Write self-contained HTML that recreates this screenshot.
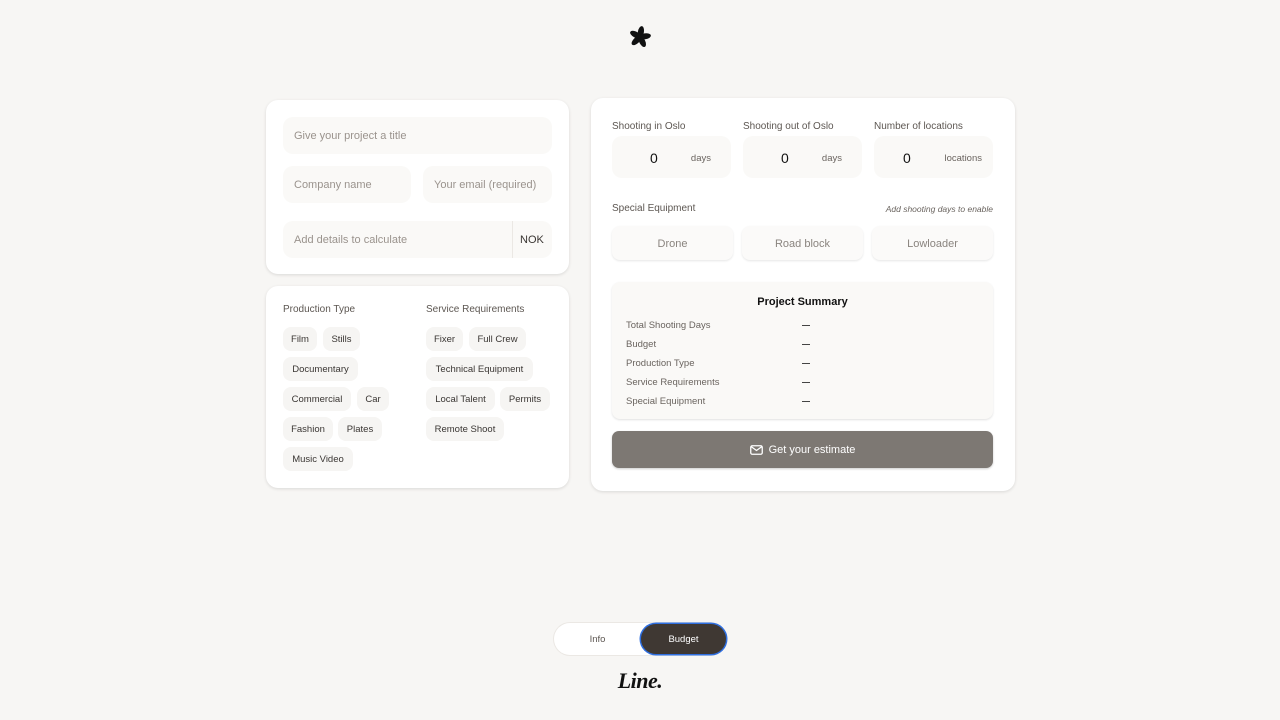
<!DOCTYPE html>
<html><head><meta charset="utf-8"><style>
*{box-sizing:border-box;margin:0;padding:0}
body{width:1280px;height:720px;background:#f7f6f4;font-family:"Liberation Sans",sans-serif;position:relative;overflow:hidden;color:#3a3633}
.a{position:absolute}
.card{position:absolute;background:#fff;border-radius:12px;box-shadow:0 1px 3px rgba(0,0,0,.12)}
.in{position:absolute;background:#faf9f7;border-radius:10px;font-size:11px;color:#9a938d;display:flex;align-items:center;padding-left:11px;padding-top:1px}
.lbl{position:absolute;font-size:10px;color:#5d5752}
.chip{position:absolute;background:#f6f5f3;border-radius:8px;height:24px;font-size:9.5px;color:#3a3633;display:flex;align-items:center;justify-content:center;padding-top:1px}
.box{position:absolute;background:#faf9f7;border-radius:10px;height:42px;width:119px}
.box .n{position:absolute;left:38px;top:14px;font-size:14px;color:#111}
.box .u{position:absolute;right:20px;top:17px;font-size:9.5px;color:#6a645f}
.eq{position:absolute;top:226px;height:34px;width:121px;background:#fbfaf9;border-radius:8px;box-shadow:0 1px 2px rgba(0,0,0,.1);font-size:11px;color:#8a847f;display:flex;align-items:center;justify-content:center;padding-top:1px}
.sr{position:absolute;left:14px;font-size:9.5px;color:#6a645f}
.sd{position:absolute;left:190px;width:8px;height:1.3px;background:#444}
</style></head><body>
<svg class="a" style="left:628px;top:26px" width="24" height="22" viewBox="0 0 24 22"><g fill="#111" transform="translate(12,11)"><ellipse rx="3" ry="6" transform="rotate(10) translate(0,-5)"/><ellipse rx="3" ry="6" transform="rotate(82) translate(0,-5)"/><ellipse rx="3" ry="6" transform="rotate(154) translate(0,-5)"/><ellipse rx="3" ry="6" transform="rotate(226) translate(0,-5)"/><ellipse rx="3" ry="6" transform="rotate(298) translate(0,-5)"/></g></svg>

<div class="card" style="left:266px;top:100px;width:303px;height:174px"></div>
<div class="in" style="left:283px;top:117px;width:269px;height:37px">Give your project a title</div>
<div class="in" style="left:283px;top:166px;width:128px;height:37px">Company name</div>
<div class="in" style="left:423px;top:166px;width:129px;height:37px">Your email (required)</div>
<div class="in" style="left:283px;top:221px;width:269px;height:37px">Add details to calculate</div>
<div class="a" style="left:512px;top:221px;width:1px;height:37px;background:#ebe8e4"></div>
<div class="a" style="left:520px;top:234px;font-size:11px;color:#3a3633">NOK</div>

<div class="card" style="left:266px;top:286px;width:303px;height:202px"></div>
<div class="lbl" style="left:283px;top:304px">Production Type</div>
<div class="lbl" style="left:426px;top:304px">Service Requirements</div>
<div class="chip" style="left:283px;top:327px;width:34px">Film</div>
<div class="chip" style="left:323px;top:327px;width:37px">Stills</div>
<div class="chip" style="left:283px;top:357px;width:75px">Documentary</div>
<div class="chip" style="left:283px;top:387px;width:68px">Commercial</div>
<div class="chip" style="left:357px;top:387px;width:32px">Car</div>
<div class="chip" style="left:283px;top:417px;width:50px">Fashion</div>
<div class="chip" style="left:338px;top:417px;width:44px">Plates</div>
<div class="chip" style="left:283px;top:447px;width:70px">Music Video</div>
<div class="chip" style="left:426px;top:327px;width:37px">Fixer</div>
<div class="chip" style="left:469px;top:327px;width:57px">Full Crew</div>
<div class="chip" style="left:426px;top:357px;width:107px">Technical Equipment</div>
<div class="chip" style="left:426px;top:387px;width:69px">Local Talent</div>
<div class="chip" style="left:500px;top:387px;width:50px">Permits</div>
<div class="chip" style="left:426px;top:417px;width:78px">Remote Shoot</div>

<div class="card" style="left:591px;top:98px;width:424px;height:393px"></div>
<div class="lbl" style="left:612px;top:121px">Shooting in Oslo</div>
<div class="lbl" style="left:743px;top:121px">Shooting out of Oslo</div>
<div class="lbl" style="left:874px;top:121px">Number of locations</div>
<div class="box" style="left:612px;top:136px"><span class="n">0</span><span class="u">days</span></div>
<div class="box" style="left:743px;top:136px"><span class="n">0</span><span class="u">days</span></div>
<div class="box" style="left:874px;top:136px"><span class="n" style="left:29px">0</span><span class="u" style="right:11px">locations</span></div>
<div class="lbl" style="left:612px;top:203px">Special Equipment</div>
<div class="a" style="right:287px;top:204px;font-size:8.5px;font-style:italic;color:#6a645f">Add shooting days to enable</div>
<div class="eq" style="left:612px">Drone</div>
<div class="eq" style="left:742px">Road block</div>
<div class="eq" style="left:872px">Lowloader</div>

<div class="a" style="left:612px;top:282px;width:381px;height:137px;background:#faf9f7;border-radius:8px;box-shadow:0 1px 2px rgba(0,0,0,.12)">
<div class="a" style="left:0;width:381px;top:14px;text-align:center;font-size:11px;font-weight:bold;color:#111">Project Summary</div>
<div class="sr" style="top:38px">Total Shooting Days</div><div class="sd" style="top:43px"></div>
<div class="sr" style="top:57px">Budget</div><div class="sd" style="top:62px"></div>
<div class="sr" style="top:76px">Production Type</div><div class="sd" style="top:81px"></div>
<div class="sr" style="top:95px">Service Requirements</div><div class="sd" style="top:100px"></div>
<div class="sr" style="top:114px">Special Equipment</div><div class="sd" style="top:119px"></div>
</div>
<div class="a" style="left:612px;top:431px;width:381px;height:37px;background:#7d7873;border-radius:7px;box-shadow:0 1px 2px rgba(0,0,0,.2);color:#fff;font-size:11px;display:flex;align-items:center;justify-content:center;gap:6px;padding-top:1px">
<svg width="13" height="10" viewBox="0 0 13 10"><rect x=".75" y=".75" width="11.5" height="8.5" rx="1.5" fill="none" stroke="#fff" stroke-width="1.3"/><path d="M1 1.5l5.5 4 5.5-4" fill="none" stroke="#fff" stroke-width="1.3"/></svg>Get your estimate</div>

<div class="a" style="left:554px;top:623px;width:172px;height:32px;background:#fff;border-radius:16px;box-shadow:0 0 0 1px #ebe8e4"></div>
<div class="a" style="left:554px;top:634px;width:87px;text-align:center;font-size:9.5px;color:#5d5752">Info</div>
<div class="a" style="left:641px;top:624px;width:85px;height:30px;background:#3f3833;border-radius:15px;box-shadow:0 0 0 1.5px #2f6fe0;color:#fff;font-size:9.5px;display:flex;align-items:center;justify-content:center;padding-top:1px">Budget</div>
<div class="a" style="left:590px;top:668px;width:100px;text-align:center;font-family:'Liberation Serif',serif;font-style:italic;font-weight:bold;font-size:22px;color:#111;letter-spacing:-.5px">Line.</div>
</body></html>
